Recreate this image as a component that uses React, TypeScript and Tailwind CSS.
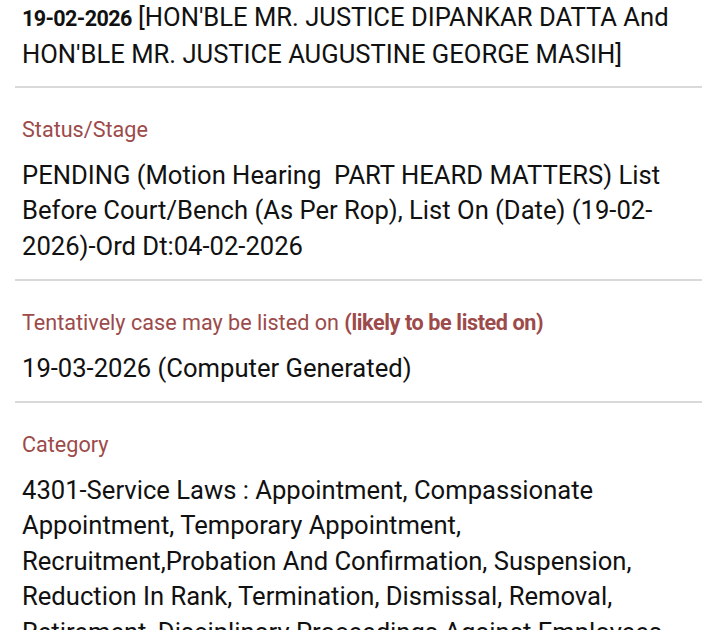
import React from 'react';

const Label: React.FC<{ children: React.ReactNode }> = ({ children }) => (
  <div className="text-[21.6px] leading-[28px] text-[#9c4a4a]">{children}</div>
);

const Section: React.FC<{ label?: React.ReactNode; children: React.ReactNode; last?: boolean }> = ({ label, children, last }) => (
  <div className={`mx-[15px] px-[7px] ${label ? 'pt-[27.5px] pb-[15px]' : 'pb-[14px]'} ${last ? '' : 'border-b-2 border-[#d9d9d9]'}`}>
    {label && <Label>{label}</Label>}
    <div className={`text-[25.6px] leading-[35.5px] text-[#111] ${label ? 'mt-[14px]' : ''}`}>{children}</div>
  </div>
);

export default function App() {
  return (
    <div className="w-[717px] h-[630px] overflow-hidden bg-white" style={{ fontFamily: 'Roboto, "Liberation Sans", sans-serif' }}>
      <Section>
        <span className="font-bold text-[21.5px] tracking-[-0.6px]">19-02-2026</span> [HON'BLE MR. JUSTICE DIPANKAR DATTA And HON'BLE MR. JUSTICE AUGUSTINE GEORGE MASIH]
      </Section>
      <Section label="Status/Stage">
        PENDING (Motion Hearing&nbsp; PART HEARD MATTERS) List Before Court/Bench (As Per Rop), List On (Date) (19-02-2026)-Ord Dt:04-02-2026
      </Section>
      <Section label={<>Tentatively case may be listed on <span className="font-bold tracking-[-0.4px]">(likely to be listed on)</span></>}>
        19-03-2026 (Computer Generated)
      </Section>
      <Section label="Category" last>
        4301-Service Laws : Appointment, Compassionate Appointment, Temporary Appointment, Recruitment,Probation And Confirmation, Suspension, Reduction In Rank, Termination, Dismissal, Removal, Retirement, Disciplinary Proceedings Against Employees
      </Section>
    </div>
  );
}
